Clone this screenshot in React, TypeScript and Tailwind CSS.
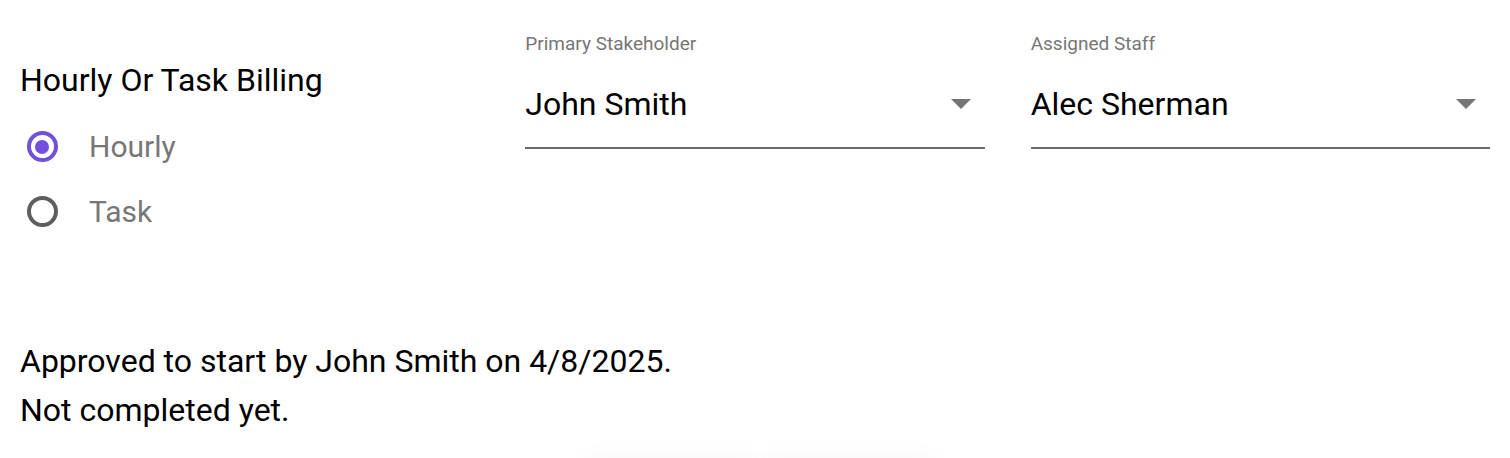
import React from "react";

function Radio({ checked, label }: { checked: boolean; label: string }) {
  return (
    <div className="flex items-center h-[65px]">
      <div className="w-[44px] flex justify-center">
        {checked ? (
          <div className="w-[31px] h-[31px] rounded-full border-[4px] border-[#7050dc] flex items-center justify-center">
            <div className="w-[14px] h-[14px] rounded-full bg-[#7050dc]" />
          </div>
        ) : (
          <div className="w-[31px] h-[31px] rounded-full border-[4px] border-[#5e5e5e]" />
        )}
      </div>
      <span className="ml-[25px] text-[30px] leading-[36px] text-[#777777]">{label}</span>
    </div>
  );
}

function Select({ label, value }: { label: string; value: string }) {
  return (
    <div className="flex flex-col">
      <div className="h-[56px] pt-[32px] text-[19px] leading-[24px] text-[#767676]">{label}</div>
      <div className="flex items-center justify-between h-[93px] border-b-2 border-[#6b6b6b] pt-[4px]">
        <span className="text-[32px] leading-[40px] text-black">{value}</span>
        <svg width="20" height="10" viewBox="0 0 20 10" className="mr-[14px]">
          <path d="M0 0 L20 0 L10 10 Z" fill="#757575" />
        </svg>
      </div>
    </div>
  );
}

export default function App() {
  return (
    <div
      className="w-[1510px] h-[458px] bg-white overflow-hidden px-5"
      style={{ fontFamily: "Roboto, 'Noto Sans', sans-serif" }}
    >
      <div className="grid grid-cols-3 gap-x-[46px]">
        <div className="flex flex-col pt-[62px]">
          <div className="text-[32px] leading-[36px] text-black">Hourly Or Task Billing</div>
          <div className="mt-[16px]">
            <Radio checked label="Hourly" />
            <Radio checked={false} label="Task" />
          </div>
        </div>
        <Select label="Primary Stakeholder" value="John Smith" />
        <Select label="Assigned Staff" value="Alec Sherman" />
      </div>
      <div className="mt-[93px] text-[32px] leading-[49px] text-black">
        <div>Approved to start by John Smith on 4/8/2025.</div>
        <div>Not completed yet.</div>
      </div>
      <div className="mt-[26px] flex justify-center gap-[8px] pl-[10px]">
        <div className="w-[170px] h-[44px] rounded-[8px] bg-white shadow-[0_-4px_24px_rgba(0,0,0,0.035)]" />
        <div className="w-[170px] h-[44px] rounded-[8px] bg-white shadow-[0_-4px_24px_rgba(0,0,0,0.035)]" />
      </div>
    </div>
  );
}
